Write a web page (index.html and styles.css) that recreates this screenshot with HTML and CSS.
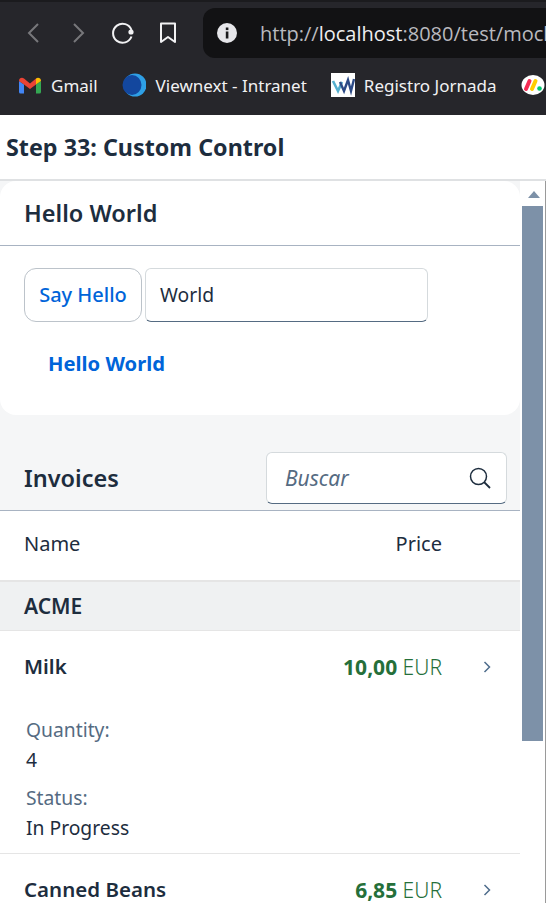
FILE: index.html
```html
<!DOCTYPE html>
<html>
<head>
<meta charset="utf-8"/>
<title>Step 33: Custom Control</title>
<link rel="stylesheet" href="styles.css">
</head>
<body>
<div class="chrome">
  <div class="toolbar">
    <svg class="nav-icon" width="20" height="24" viewBox="0 0 20 24"><path d="M15 3 L6 12 L15 21" fill="none" stroke="#77777b" stroke-width="2"/></svg>
    <svg class="nav-icon" width="20" height="24" viewBox="0 0 20 24"><path d="M6 3 L15 12 L6 21" fill="none" stroke="#77777b" stroke-width="2"/></svg>
    <svg class="nav-icon" width="24" height="24" viewBox="0 0 24 24"><path d="M20.5 9 A9.5 9.5 0 1 0 20.5 15.5" fill="none" stroke="#f1f1f3" stroke-width="2"/><circle cx="20" cy="11" r="2.6" fill="#f1f1f3"/></svg>
    <svg class="nav-icon" width="18" height="24" viewBox="0 0 18 24"><path d="M2 2.5 H16 V21 L9 16 L2 21 Z" fill="none" stroke="#f1f1f3" stroke-width="2" stroke-linejoin="round"/></svg>
    <div class="url-box">
      <svg class="info-icon" width="20" height="20" viewBox="0 0 20 20"><circle cx="10" cy="10" r="10" fill="#e6e6ea"/><rect x="8.8" y="4.5" width="2.6" height="2.6" fill="#1a1a1d"/><rect x="8.8" y="8.5" width="2.6" height="7" fill="#1a1a1d"/></svg>
      <span class="url">http://<span class="url-host">localhost</span>:8080/test/mockServer.html</span>
    </div>
  </div>
  <div class="bookmarks">
    <span class="bookmark">
      <svg width="22" height="17" viewBox="0 0 22 17"><path d="M0 4 V15 A1.5 1.5 0 0 0 1.5 16.5 H5 V7.5 Z" fill="#4285f4"/><path d="M17 7.5 V16.5 H20.5 A1.5 1.5 0 0 0 22 15 V4 Z" fill="#34a853"/><path d="M0 4 C0 1 3 0 5 1.500 L11 6.500 L17 1.500 L17 7.500 L11 12 L5 7.500 L0 4 Z" fill="#ea4335"/><path d="M17 1.500 C19 0 22 1 22 4 L17 7.500 Z" fill="#fbbc04"/></svg>
      Gmail
    </span>
    <span class="bookmark">
      <svg width="24" height="24" viewBox="0 0 24 24"><circle cx="13" cy="12" r="11.500" fill="#2e9fe6"/><ellipse cx="10" cy="12" rx="9.500" ry="10" fill="#13479e"/></svg>
      Viewnext - Intranet
    </span>
    <span class="bookmark bookmark-tight">
      <svg width="24" height="24" viewBox="0 0 24 24"><rect width="24" height="24" fill="#fff"/><path d="M2 8 L7 18 L11 9" fill="none" stroke="#55b0cf" stroke-width="2.600"/><path d="M9 9 L13 18 L17 7 L20 18 L23 6" fill="none" stroke="#2c4a86" stroke-width="2.400"/></svg>
      Registro Jornada
    </span>
    <span class="bookmark">
      <svg width="24" height="24" viewBox="0 0 24 24"><ellipse cx="12" cy="12" rx="11.500" ry="10" fill="#fff"/><path d="M5 16 L8.500 8" stroke="#f62b54" stroke-width="4" stroke-linecap="round"/><path d="M11 16 L14.500 8" stroke="#ffcc00" stroke-width="4" stroke-linecap="round"/><circle cx="18.500" cy="15.500" r="2.300" fill="#00ca72"/></svg>
    </span>
  </div>
</div>

<div class="page-title"><h1>Step 33: Custom Control</h1></div>

<div class="app">
  <div class="content">
    <section class="panel">
      <h2 class="panel-head">Hello World</h2>
      <div class="panel-body">
        <div class="hello-row">
          <button class="btn">Say Hello</button>
          <div class="input input-name">World</div>
        </div>
        <div class="hello-text">Hello World</div>
      </div>
    </section>

    <div class="table-bar">
      <h2>Invoices</h2>
      <div class="input input-search">
        <span class="placeholder">Buscar</span>
        <svg width="24" height="24" viewBox="0 0 24 24"><circle cx="10.500" cy="10.500" r="8" fill="none" stroke="#1d2d3e" stroke-width="1.500"/><path d="M16 16 L22 22" stroke="#1d2d3e" stroke-width="1.800"/></svg>
      </div>
    </div>

    <div class="table">
      <div class="row head-row">
        <span class="cell-name">Name</span>
        <span class="cell-price">Price</span>
      </div>
      <div class="group">ACME</div>
      <div class="item">
        <div class="row item-row">
          <span class="cell-name strong">Milk</span>
          <span class="cell-price"><b>10,00</b> EUR</span>
          <svg class="chevron" width="8" height="12" viewBox="0 0 8 12"><path d="M1.500 1 L6.500 6 L1.500 11" fill="none" stroke="#4f6d8c" stroke-width="1.500"/></svg>
        </div>
        <dl class="details">
          <dt>Quantity:</dt>
          <dd>4</dd>
          <dt>Status:</dt>
          <dd>In Progress</dd>
        </dl>
      </div>
      <div class="item">
        <div class="row item-row">
          <span class="cell-name strong">Canned Beans</span>
          <span class="cell-price"><b>6,85</b> EUR</span>
          <svg class="chevron" width="8" height="12" viewBox="0 0 8 12"><path d="M1.500 1 L6.500 6 L1.500 11" fill="none" stroke="#4f6d8c" stroke-width="1.500"/></svg>
        </div>
      </div>
    </div>
  </div>

  <div class="scrollbar">
    <div class="scroll-arrow"></div>
    <div class="scroll-thumb"></div>
  </div>
</div>
</body>
</html>
```

FILE: styles.css
```css
html, body {
  margin: 0;
  height: 903px;
  overflow: hidden;
}

body {
  font-family: "Noto Sans", "Open Sans", sans-serif;
  font-size: 19.3px;
  color: #1d2d3e;
  background-color: white;
  display: flex;
  flex-direction: column;
}

h1, h2, dl, dd {
  margin: 0;
}

/* browser chrome */
.chrome {
  flex: none;
  height: 115px;
  background-color: #26262b;
  border-top: 2px solid #1b1b1e;
  box-sizing: border-box;
  overflow: hidden;
}

.toolbar {
  height: 62px;
  display: flex;
  align-items: center;
  padding-left: 23px;
}

.nav-icon {
  flex: none;
  margin-right: 25px;
}

.nav-icon + .nav-icon {
  margin-right: 23px;
}

.nav-icon + .nav-icon + .nav-icon {
  margin-right: 24px;
}

.nav-icon + .nav-icon + .nav-icon + .nav-icon {
  margin-right: 26px;
}

.url-box {
  flex: none;
  width: 343px;
  height: 50px;
  padding-left: 14px;
  box-sizing: border-box;
  display: flex;
  align-items: center;
  gap: 23px;
  background-color: #121214;
  border-radius: 12px 0 0 12px;
  white-space: nowrap;
  overflow: hidden;
}

.info-icon {
  flex: none;
}

.url {
  font-family: "Open Sans", sans-serif;
  font-size: 20px;
  color: #b9b9bf;
}

.url-host {
  color: #eeeef0;
}

.bookmarks {
  height: 42px;
  display: flex;
  align-items: center;
  padding-left: 19px;
  gap: 24px;
  white-space: nowrap;
}

.bookmark {
  display: flex;
  align-items: center;
  gap: 10px;
  font-size: 17px;
  color: #f1f1f3;
}

.bookmark-tight {
  gap: 9px;
}

/* page */
.page-title {
  flex: none;
  height: 66px;
  display: flex;
  align-items: center;
  padding-left: 6px;
  box-sizing: border-box;
  border-bottom: 2px solid #dfe1e3;
}

h1 {
  font-size: 23.300px;
  font-weight: 700;
}

.app {
  flex: 1;
  display: flex;
  min-height: 0;
}

.content {
  width: 520px;
  flex: none;
  background-color: #f5f6f7;
  overflow: hidden;
}

.panel {
  height: 234px;
  background-color: white;
  border-radius: 16px;
}

.panel-head {
  height: 65px;
  line-height: 64px;
  padding-left: 24px;
  font-size: 23.500px;
  font-weight: 600;
  border-bottom: 1px solid #a8b3c2;
  box-sizing: border-box;
}

.panel-body {
  padding: 22px 24px 0;
}

.hello-row {
  display: flex;
  gap: 3px;
}

.btn {
  width: 118px;
  height: 54px;
  padding: 0 0 2px;
  font: inherit;
  font-size: 20px;
  font-weight: 500;
  color: #0064d9;
  background-color: white;
  border: 1px solid #bcc3ca;
  border-radius: 12px;
}

.input {
  height: 54px;
  box-sizing: border-box;
  display: flex;
  align-items: center;
  background-color: white;
  border: 1px solid #d5dadd;
  border-bottom: 1px solid #556b82;
  border-radius: 6px;
}

.input-name {
  width: 283px;
  padding: 0 0 2px 14px;
}

.hello-text {
  margin: 27px 0 0 24px;
  font-size: 20.200px;
  font-weight: 700;
  color: #0064d9;
}

.table-bar {
  height: 96px;
  box-sizing: border-box;
  padding: 0 13px 6px 24px;
  display: flex;
  align-items: flex-end;
  justify-content: space-between;
  border-bottom: 1px solid #a8b3c2;
}

.table-bar h2 {
  font-size: 23.500px;
  font-weight: 600;
  line-height: 52px;
}

.input-search {
  width: 241px;
  height: 52px;
  padding: 0 14px 0 18px;
  justify-content: space-between;
}

.placeholder {
  font-size: 21px;
  font-style: italic;
  color: #556b82;
}

.table {
  background-color: white;
}

.row {
  display: flex;
  align-items: center;
  padding-left: 24px;
}

.head-row {
  height: 69px;
  box-sizing: border-box;
  padding-bottom: 5px;
  font-size: 20px;
}

.cell-name {
  flex: 1;
}

.cell-price {
  margin-right: 78px;
}

.strong {
  margin-bottom: 2px;
  font-size: 20.500px;
  font-weight: 600;
}

.group {
  height: 51px;
  line-height: 49px;
  padding-left: 24px;
  box-sizing: border-box;
  font-size: 21px;
  font-weight: 600;
  background-color: #eff1f2;
  border-top: 2px solid #e5e5e5;
  border-bottom: 1px solid #e5e5e5;
}

.item {
  border-bottom: 1px solid #e5e5e5;
}

.item-row {
  height: 72px;
}

.item-row .cell-price {
  margin-right: 41px;
  font-size: 21px;
  color: #256f3a;
  font-weight: 300;
}

.item-row .cell-price b {
  font-weight: 700;
}

.chevron {
  flex: none;
  margin-right: 29px;
}

.details {
  padding: 12px 0 2px 26px;
}

.details dt {
  height: 30px;
  line-height: 30px;
  color: #556b82;
}

.details dd {
  height: 38px;
  line-height: 30px;
}

/* scrollbar */
.scrollbar {
  flex: 1;
  padding-left: 2px;
  border-right: 1px solid #9a9a9a;
}

.scroll-arrow {
  width: 0;
  margin: 10px auto 8px;
  border: 6px solid transparent;
  border-top: 0;
  border-bottom: 7px solid #7d91a8;
}

.scroll-thumb {
  width: 21px;
  height: 535px;
  background-color: #7d91a8;
}
```
